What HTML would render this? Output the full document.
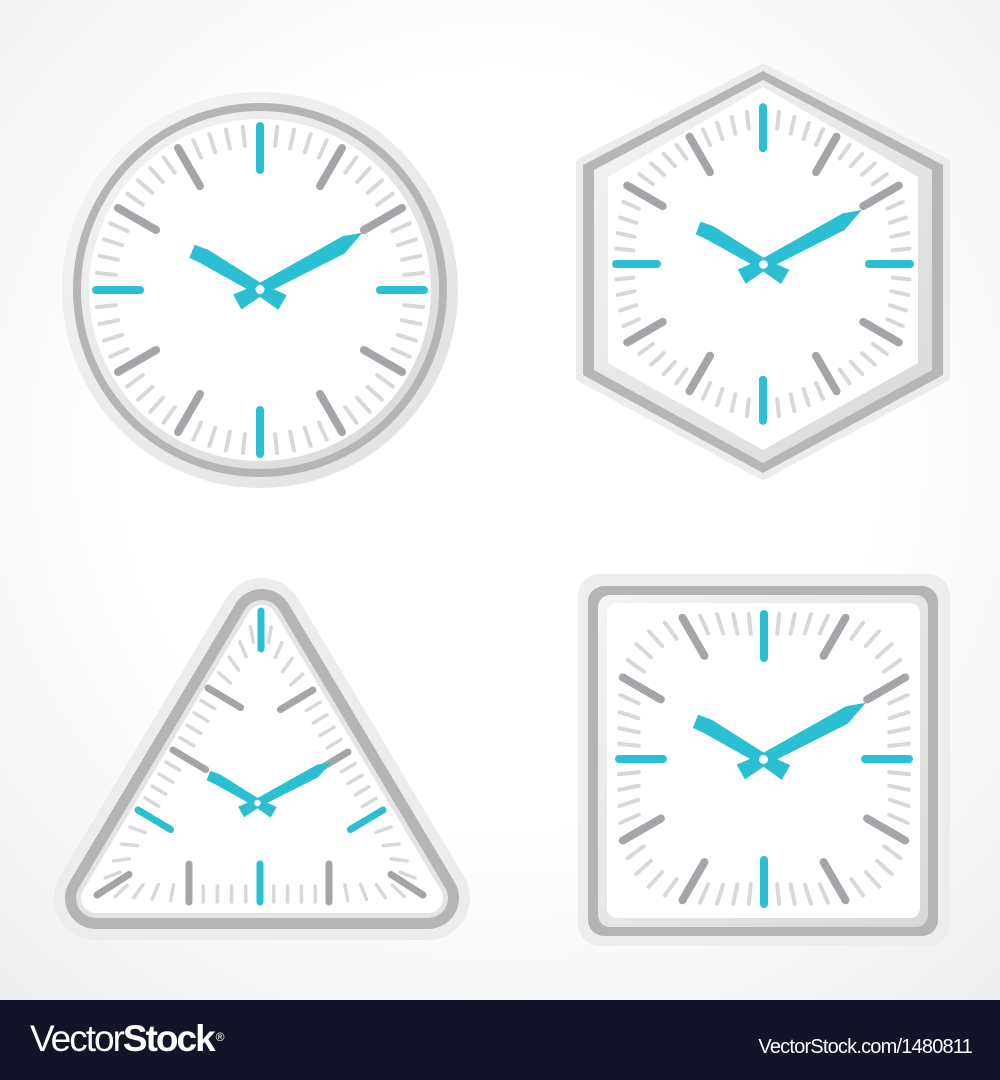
<!DOCTYPE html>
<html><head><meta charset="utf-8"><style>
html,body{margin:0;padding:0}
body{width:1000px;height:1080px;overflow:hidden;background:#fff;font-family:"Liberation Sans",sans-serif}
#art{position:absolute;left:0;top:0}
#foot{position:absolute;left:0;top:1000px;width:1000px;height:80px;background:#13142a;color:#fff}
#logo{position:absolute;left:30px;top:19px;font-size:37px;letter-spacing:-2px;line-height:40px}
#logo b{font-weight:bold}
#logo sup{font-size:12px;vertical-align:top;position:relative;top:-2px;margin-left:2px}
#id{position:absolute;right:28px;top:36px;font-size:20px;letter-spacing:-0.8px}
</style></head><body>
<svg id="art" width="1000" height="1000" xmlns="http://www.w3.org/2000/svg">
<defs>
<radialGradient id="bg" cx="50%" cy="45%" r="75%"><stop offset="0.5" stop-color="#ffffff"/><stop offset="1" stop-color="#eeeeee"/></radialGradient>
<linearGradient id="lg" x1="0" y1="0" x2="1" y2="1"><stop offset="0" stop-color="#f4f4f4"/><stop offset="1" stop-color="#d8d8d8"/></linearGradient>
</defs>
<rect width="1000" height="1000" fill="url(#bg)"/>
<!-- round -->
<circle cx="260" cy="290" r="198" fill="url(#lg)" opacity="0.8"/>
<circle cx="260" cy="290" r="187" fill="#b5b5b8"/>
<circle cx="260" cy="290" r="179" fill="url(#lg)"/>
<circle cx="260" cy="290" r="171" fill="#fff"/>
<!-- hex -->
<polygon points="763,69 945,163 945,377 763,475 581,377 581,163" fill="#ececec" stroke="#ececec" stroke-width="10" stroke-linejoin="round"/>
<polygon points="763,71 943,165 943,375 763,473 583,375 583,165" fill="#b6b6b9"/>
<polygon points="763,80 932,170 932,370 763,463 594,370 594,170" fill="url(#lg)"/>
<polygon points="763,87 918,177 918,363 763,450 608,363 608,177" fill="#fff"/>
<!-- triangle -->
<g stroke-linejoin="round">
<polygon points="262,620 96,898 428,898" fill="#ececec" stroke="#ececec" stroke-width="84"/>
<polygon points="262,620 96,898 428,898" fill="#b5b5b8" stroke="#b5b5b8" stroke-width="62"/>
<polygon points="262,620 96,898 428,898" fill="#e4e4e4" stroke="#e4e4e4" stroke-width="40"/>
<polygon points="262,620 96,898 428,898" fill="#fff" stroke="#fff" stroke-width="30"/>
</g>
<!-- square -->
<rect x="578" y="574" width="372" height="372" rx="22" fill="#ededed"/>
<rect x="588" y="586" width="350" height="350" rx="16" fill="#b4b4b7"/>
<rect x="598" y="595" width="330" height="332" rx="12" fill="url(#lg)"/>
<rect x="607" y="603" width="313" height="315" rx="10" fill="#fff"/>
<g id="ticks"></g>
</svg>
<div id="foot"><div id="logo">Vector<b>Stock</b><sup>®</sup></div><div id="id">VectorStock.com/1480811</div></div>
<script>
var NS="http://www.w3.org/2000/svg",G=document.getElementById("ticks");
var CY="#2bbfd4",GR="#a5a5a9",LT="#d8d8da";
function line(x1,y1,x2,y2,c,w){var l=document.createElementNS(NS,"line");
l.setAttribute("x1",x1);l.setAttribute("y1",y1);l.setAttribute("x2",x2);l.setAttribute("y2",y2);
l.setAttribute("stroke",c);l.setAttribute("stroke-width",w);l.setAttribute("stroke-linecap","round");G.appendChild(l);}
function radial(cx,cy,rf,H,M){for(var i=0;i<60;i++){var t=i*Math.PI/30,dx=Math.sin(t),dy=-Math.cos(t),R=rf(t);
var h=i%5==0,L=h?H:M,c=h?(i%15==0?CY:GR):LT,w=h?8:4;
line(cx+dx*R,cy+dy*R,cx+dx*(R-L),cy+dy*(R-L),c,w);}}
radial(260,290,function(){return 164},44,19);
radial(764,759,function(t){var c=Math.abs(Math.cos(t)),s=Math.abs(Math.sin(t));return 145*Math.pow(Math.pow(c,4)+Math.pow(s,4),-0.25)},44,20);
radial(763,264,function(t){var phi=Math.PI/2-t;var m=Math.PI/3;var a=((phi+Math.PI/6)%m+m)%m-Math.PI/6;var d=147/Math.cos(a);return 147+0.43*(d-147)},41,17);
// triangle
var k=0.857,q=0.514,d1=0.84,d2=0.54;
var A=[[261,611,0,1],[313,690,-k,q],[348,752,-k,q],[383,810,-k,q],[423,895,-d1,-d2],[329,902,0,-1],[260,902,0,-1],[189,902,0,-1],[97,895,d1,-d2],[138,810,k,q],[173,750,k,q],[208,688,k,q]];
for(var i=0;i<60;i++){var a=A[Math.floor(i/5)],b=A[(Math.floor(i/5)+1)%12],f=(i%5)/5;
var x=a[0]+(b[0]-a[0])*f,y=a[1]+(b[1]-a[1])*f,nx=a[2]+(b[2]-a[2])*f,ny=a[3]+(b[3]-a[3])*f,n=Math.hypot(nx,ny);nx/=n;ny/=n;
var h=i%5==0,L=h?38:16,c=h?(i%15==0?CY:GR):LT,w=h?7:3.5;
line(x,y,x+nx*L,y+ny*L,c,w);}
// hands
function hand(cx,cy,s,ang,pts){var p=document.createElementNS(NS,"polygon");
p.setAttribute("points",pts.map(function(v){return v[0]+","+v[1]}).join(" "));
p.setAttribute("fill",CY);p.setAttribute("transform","translate("+cx+","+cy+") rotate("+ang+") scale("+s+")");G.appendChild(p);}
function hands(cx,cy,s){
var Lm=117,Lh=79;
hand(cx,cy,s,-60,[[-8.5,26],[8.5,26],[6,0],[8.5,-0.82*Lh],[6,-Lh],[-8,-Lh+2],[-7,-0.82*Lh],[-6,0]]);
hand(cx,cy,s,61,[[-8.5,26],[8.5,26],[6,0],[9.5,-0.78*Lm],[0,-Lm],[-6.5,-0.84*Lm],[-6,0]]);
var c=document.createElementNS(NS,"circle");c.setAttribute("cx",cx);c.setAttribute("cy",cy);c.setAttribute("r",4.5*s);c.setAttribute("fill","#fff");G.appendChild(c);}
hands(260,289.5,1);hands(763.5,264.5,0.96);hands(763.5,759.5,1);hands(257.5,803,0.72);
</script>
</body></html>
